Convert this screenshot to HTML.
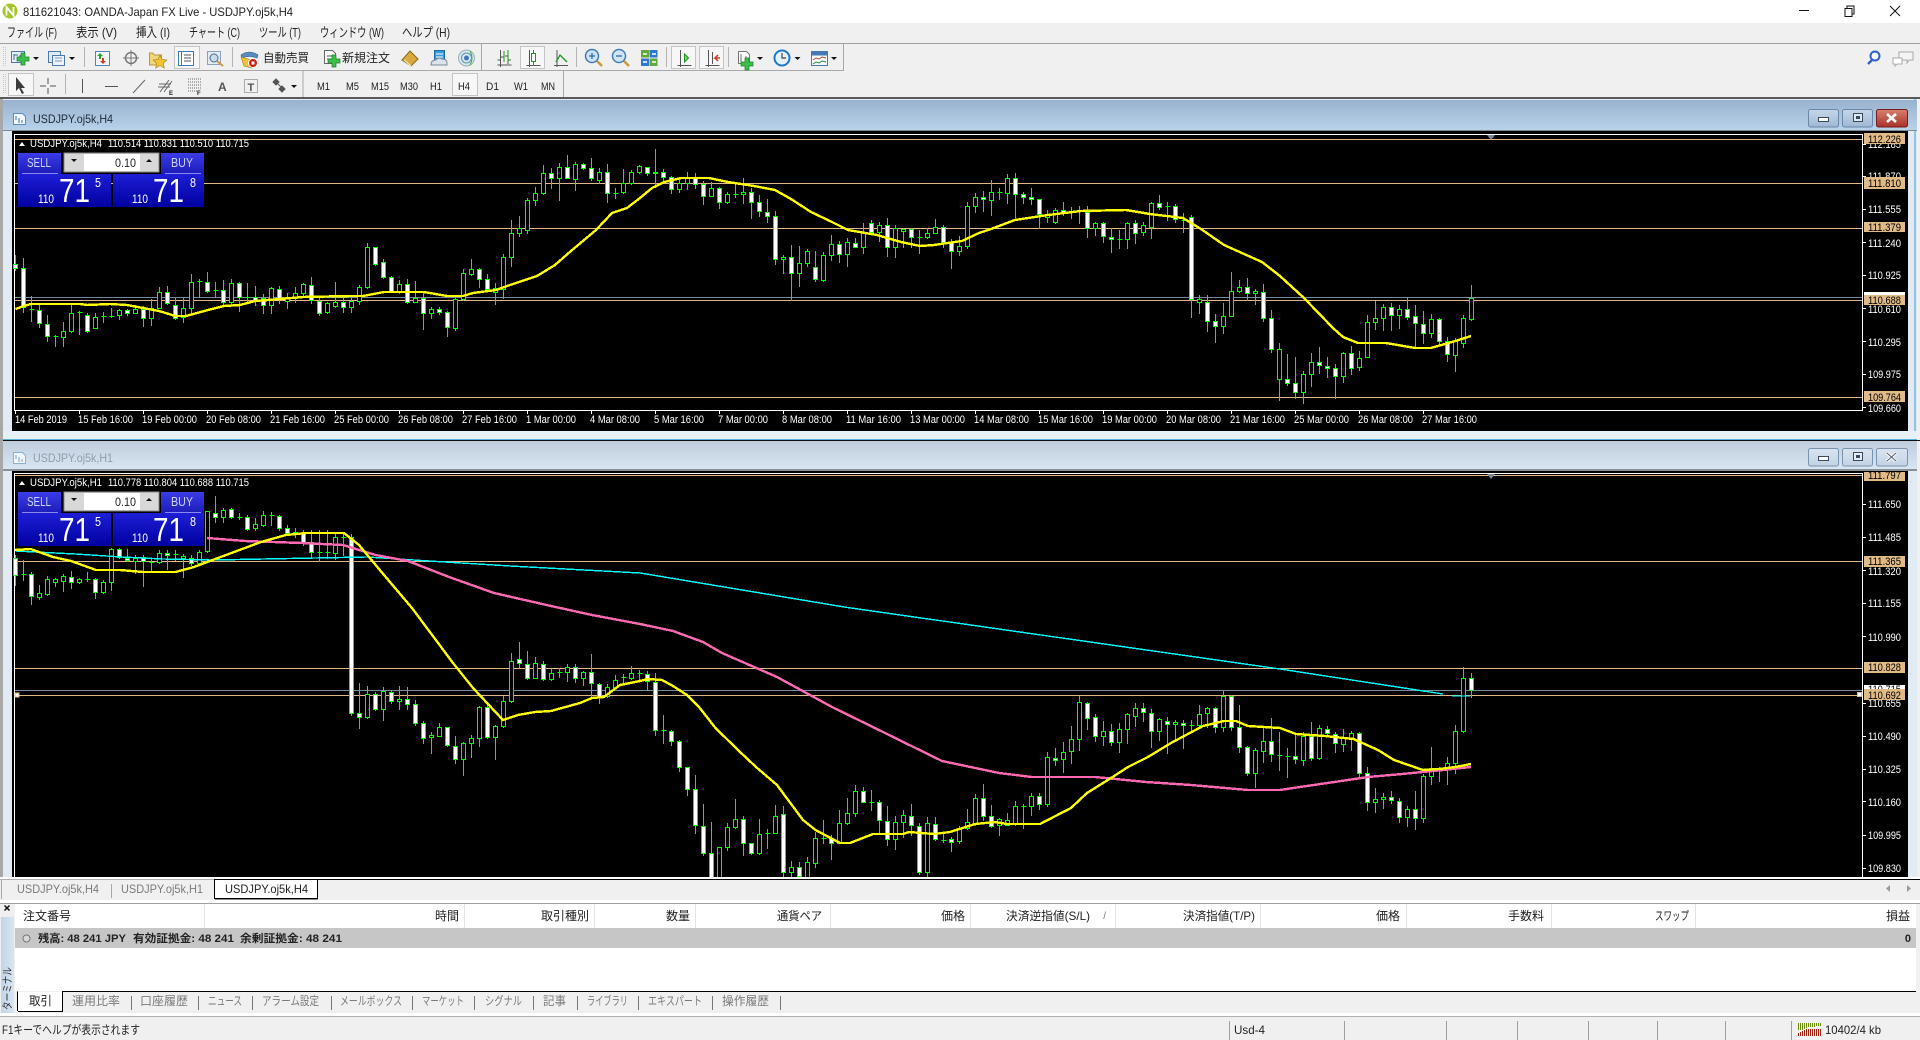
<!DOCTYPE html>
<html><head><meta charset="utf-8"><title>811621043: OANDA-Japan FX Live - USDJPY.oj5k,H4</title>
<style>
html,body{margin:0;padding:0;width:1920px;height:1040px;overflow:hidden;background:#f0f0f0}
svg{display:block}
text{font-family:"Liberation Sans","Noto Sans CJK JP",sans-serif;font-size:12px;fill:#222}
.n text,text.n{font-family:"Liberation Sans Narrow","Liberation Sans","Noto Sans CJK JP",sans-serif;font-size:11px}
.w text{fill:#fff}
.k text{fill:#000}
.g text{fill:#7a7a7a}
.c{shape-rendering:crispEdges}
.m text{font-size:13px}
</style></head><body>
<svg width="1920" height="1040" viewBox="0 0 1920 1040" xmlns="http://www.w3.org/2000/svg">
<defs>
<linearGradient id="t1" x1="0" y1="0" x2="0" y2="1"><stop offset="0" stop-color="#98b2cf"/><stop offset="1" stop-color="#b9d2ea"/></linearGradient>
<linearGradient id="t2" x1="0" y1="0" x2="0" y2="1"><stop offset="0" stop-color="#bfcddc"/><stop offset="1" stop-color="#d9e6f4"/></linearGradient>
<linearGradient id="bs" x1="0" y1="0" x2="0" y2="1"><stop offset="0" stop-color="#3c3ce8"/><stop offset="1" stop-color="#1c1cb8"/></linearGradient>
<linearGradient id="bp" x1="0" y1="0" x2="0" y2="1"><stop offset="0" stop-color="#1e1ed6"/><stop offset="1" stop-color="#0000a0"/></linearGradient>
<linearGradient id="wb" x1="0" y1="0" x2="0" y2="1"><stop offset="0" stop-color="#c6d6e9"/><stop offset="1" stop-color="#9fb8d4"/></linearGradient>
<linearGradient id="wb2" x1="0" y1="0" x2="0" y2="1"><stop offset="0" stop-color="#d9e4f0"/><stop offset="1" stop-color="#c3d3e4"/></linearGradient>
<linearGradient id="wr" x1="0" y1="0" x2="0" y2="1"><stop offset="0" stop-color="#d8806f"/><stop offset="1" stop-color="#a8322a"/></linearGradient>
<linearGradient id="vt" x1="0" y1="0" x2="1" y2="0"><stop offset="0" stop-color="#c2d5e8"/><stop offset="1" stop-color="#d8e5f2"/></linearGradient>
<clipPath id="c1"><rect x="12" y="131" width="1850" height="279"/></clipPath>
<clipPath id="c2"><rect x="12" y="471" width="1850" height="406"/></clipPath>
</defs>

<!-- title bar -->
<rect x="0" y="0" width="1920" height="23" fill="#fff"/>
<circle cx="10" cy="11" r="7.500" fill="#a4c62a"/><path d="M6.500 15.500V7l7 8.500V7" fill="none" stroke="#fff" stroke-width="1.800"/>
<text x="23" y="16" textLength="270" lengthAdjust="spacingAndGlyphs">811621043: OANDA-Japan FX Live - USDJPY.oj5k,H4</text>
<path d="M1799 10.500h10" stroke="#111" class="c"/>
<path d="M1845 8.500h7v8h-7zM1847 8.500v-2.500h7v8h-2" fill="none" stroke="#111" class="c"/>
<path d="M1890 6l10 10M1900 6l-10 10" stroke="#111" fill="none"/>

<!-- menu -->
<g class="m">
<text x="7" y="37" textLength="50" lengthAdjust="spacingAndGlyphs">ファイル (F)</text>
<text x="76" y="37" textLength="41" lengthAdjust="spacingAndGlyphs">表示 (V)</text>
<text x="136" y="37" textLength="34" lengthAdjust="spacingAndGlyphs">挿入 (I)</text>
<text x="189" y="37" textLength="51" lengthAdjust="spacingAndGlyphs">チャート (C)</text>
<text x="259" y="37" textLength="42" lengthAdjust="spacingAndGlyphs">ツール (T)</text>
<text x="320" y="37" textLength="64" lengthAdjust="spacingAndGlyphs">ウィンドウ (W)</text>
<text x="402" y="37" textLength="48" lengthAdjust="spacingAndGlyphs">ヘルプ (H)</text>
</g>
<rect x="0" y="43" width="1920" height="1" fill="#a0a0a0" class="c"/>

<!-- toolbar frames -->
<path d="M0 70.500H843.500V44M0 97.500" fill="none" stroke="#a8a8a8" class="c"/>
<path d="M563.500 71V97" stroke="#a8a8a8" class="c"/>
<path d="M481.500 44V70M303 71V97" stroke="#a8a8a8" class="c"/>
<path d="M3.500 47v20M5.500 47v20M3.500 74v20M5.500 74v20" stroke="#c8c8c8" stroke-dasharray="1 1" class="c"/>
<path d="M84.500 47v20M232.500 47v20M576.500 47v20M666.500 47v20M728.500 47v20M65.500 74v20" stroke="#b4b4b4" class="c"/>
<!-- active buttons -->
<g fill="#f7f7f7" stroke="#c4c4c4" class="c">
<rect x="174.500" y="46.500" width="25" height="22"/><rect x="520.500" y="46.500" width="24" height="22"/>
<rect x="671.500" y="46.500" width="24" height="22"/><rect x="699.500" y="46.500" width="24" height="22"/>
<rect x="8.500" y="73.500" width="25" height="22"/><rect x="452.500" y="73.500" width="25" height="22"/>
</g>

<!-- toolbar 1 icons -->
<rect x="11.500" y="51.500" width="13" height="11" fill="#e6eef8" stroke="#4b78ad" class="c"/>
<path d="M14 60v-6M14 55h4M20 60v-5" stroke="#3b6ea8" fill="none"/>
<path d="M21 53h4v4h4v4h-4v4h-4v-4h-4v-4h4z" fill="#3cc04a" stroke="#1d7f2c" stroke-width=".7"/>
<path d="M33 57h6l-3 3z" fill="#111"/>
<rect x="48.500" y="51.500" width="12" height="11" fill="#dfe8f5" stroke="#4b78ad" class="c"/>
<rect x="52.500" y="55.500" width="12" height="10" fill="#eef3fa" stroke="#4b78ad" class="c"/>
<path d="M55 58h7M55 61h7" stroke="#7a93b4"/>
<path d="M69 57h6l-3 3z" fill="#111"/>
<rect x="95.500" y="51.500" width="14" height="14" fill="#f4f8fc" stroke="#4f86b4" class="c"/>
<path d="M100 53l3 3h-2v3h-2v-3h-2z" fill="#2ca02c"/><path d="M103 64l-3-3h2v-3h2v3h2z" fill="#d83a1c"/>
<circle cx="131" cy="58" r="5.500" fill="none" stroke="#777" stroke-width="1.500"/><path d="M131 50v16M123 58h16" stroke="#777"/>
<path d="M149.500 53v12h12v-10h-7l-2-2z" fill="#f2d77a" stroke="#b8963c"/>
<path d="M160 55l2 4.500 4.800 .5-3.500 3.300 1 4.700-4.300-2.500-4.300 2.500 1-4.700-3.500-3.300 4.800-.5z" fill="#f4c531" stroke="#a8872a" stroke-width=".7"/>
<rect x="178.500" y="51.500" width="15" height="14" fill="#fff" stroke="#3c78b4" class="c"/>
<path d="M181.500 52v13" stroke="#3c78b4"/><path d="M184 55h7M184 58h7M184 61h7" stroke="#555"/>
<rect x="207.500" y="51.500" width="13" height="13" fill="#e4ebf3" stroke="#8aa0b8" class="c"/>
<circle cx="214" cy="58" r="4" fill="#c8dcf0" stroke="#4a6a8a"/><path d="M217 61l6 5" stroke="#c89a3a" stroke-width="2"/>
<path d="M241 55q8-6 17 0l-1 3q-8-3-15 0z" fill="#5a8cc0" stroke="#2f5a88" stroke-width=".6"/>
<path d="M241 57l3 9 8 2v-8z" fill="#f0c040" stroke="#a07818" stroke-width=".6"/>
<circle cx="253" cy="63" r="4.500" fill="#d81c10" stroke="#fff"/><rect x="251.500" y="61.500" width="3" height="3" fill="#fff"/>
<g style="font-size:12px"><text x="263" y="62" textLength="46" lengthAdjust="spacingAndGlyphs">自動売買</text><text x="342" y="62" textLength="48" lengthAdjust="spacingAndGlyphs">新規注文</text></g>
<path d="M324.500 50.500h8l3 3v10h-11z" fill="#fafafa" stroke="#666"/><path d="M327 56h6M327 59h6" stroke="#555"/>
<path d="M332 55h4v4h4v4h-4v4h-4v-4h-4v-4h4z" fill="#3cc04a" stroke="#1d7f2c" stroke-width=".7"/>
<path d="M402 60l8-9 8 8-7 7z" fill="#d9a93f" stroke="#8a6a1a"/><path d="M404 60l7 6" stroke="#f3e2a8" stroke-width="1.200"/>
<rect x="434.500" y="50.500" width="10" height="11" fill="#3a9ad9" stroke="#1c6aa8"/><path d="M436 54h7M436 57h7" stroke="#fff"/>
<path d="M431 65q0-5 5-5 2-3 6-1 5 0 5 4v2z" fill="#dde3ea" stroke="#7a8a9a"/>
<circle cx="466.500" cy="58" r="8" fill="#d9e6ee" stroke="#9ab0b8"/><circle cx="466.500" cy="58" r="5" fill="none" stroke="#5a9aa8"/><circle cx="466.500" cy="58" r="2.500" fill="#3c78c0"/><path d="M470 51q4 7 0 14" fill="none" stroke="#4caf50"/>
<path d="M497.500 65h14M500.500 50v17M508 53v11M500.500 60h-3M500.500 57h3M508 60h3M508 56h-3" stroke="#555" fill="none"/>
<path d="M504 51v3M504 60h0M508 50v12" stroke="#1a9a1a"/><path d="M504 53v9" stroke="#1a9a1a"/>
<path d="M526.500 65.500h14M529.500 50v17" stroke="#555"/><path d="M533.500 50v16" stroke="#1a9a1a"/><rect x="531.500" y="53.500" width="4" height="8" fill="#fff" stroke="#1a9a1a" class="c"/>
<path d="M554 65.500h14M557 50v17" stroke="#555"/><path d="M556 62l4-7 3 3 4 4" fill="none" stroke="#1a9a1a" stroke-width="1.300"/>
<circle cx="592" cy="56" r="6.500" fill="#cfe4f6" stroke="#3e7fb8" stroke-width="1.500"/><path d="M589 56h6M592 53v6" stroke="#2a6aa8" stroke-width="1.300"/><path d="M597 61l5 5" stroke="#c89a3a" stroke-width="2.500"/>
<circle cx="619" cy="56" r="6.500" fill="#cfe4f6" stroke="#3e7fb8" stroke-width="1.500"/><path d="M616 56h6" stroke="#2a6aa8" stroke-width="1.300"/><path d="M624 61l5 5" stroke="#c89a3a" stroke-width="2.500"/>
<rect x="641" y="50" width="8" height="7.500" fill="#62a83a"/><rect x="649.500" y="50" width="8" height="7.500" fill="#2f78d0"/><rect x="641" y="58.500" width="8" height="7.500" fill="#2f78d0"/><rect x="649.500" y="58.500" width="8" height="7.500" fill="#62a83a"/>
<path d="M643 54h4M652 54h4M643 62h4M652 62h4" stroke="#fff" stroke-width="1.500"/>
<path d="M677.500 65.500h14M680.500 50v17" stroke="#555"/><path d="M684.500 54v8l4-4z" fill="#7ad07a" stroke="#1a9a1a"/>
<path d="M705.500 65.500h14M708.500 50v17M712.500 52v12" stroke="#555"/><path d="M720 58l-5 0 3-3M715 58l3 3" fill="none" stroke="#c8401c" stroke-width="1.500"/>
<path d="M738.500 51.500h8l3 3v9h-11z" fill="#fafafa" stroke="#777"/><path d="M741 54v8M746 56v6" stroke="#777"/>
<path d="M745 58h4v4h4v4h-4v4h-4v-4h-4v-4h4z" fill="#3cc04a" stroke="#1d7f2c" stroke-width=".7"/>
<path d="M757 57h6l-3 3z" fill="#111"/>
<circle cx="782" cy="58" r="7.500" fill="#e8f2fa" stroke="#1e78c8" stroke-width="2"/><path d="M782 53v5h4" fill="none" stroke="#444" stroke-width="1.200"/>
<path d="M794.500 57h6l-3 3z" fill="#111"/>
<rect x="811.500" y="51.500" width="16" height="14" fill="#f4f8fc" stroke="#4878a8" class="c"/><rect x="812" y="52" width="15" height="3.500" fill="#4878b8"/>
<path d="M813 60l3-2 3 1 3-2 4 1" fill="none" stroke="#b84a2a"/><path d="M813 64l3-2 3 1 3-2 4 1" fill="none" stroke="#2a8a3a"/>
<path d="M831 57h6l-3 3z" fill="#111"/>
<circle cx="1875" cy="56" r="4.500" fill="#fff" stroke="#2a62c8" stroke-width="2"/><path d="M1872 60l-4 4" stroke="#2a62c8" stroke-width="2.400"/>
<path d="M1899 52h14v8h-4l-2 3v-3h-8z" fill="#f4f4f4" stroke="#a8a8a8"/><path d="M1893 58h9v6h-5l-2 2v-2h-2z" fill="#fff" stroke="#a8a8a8"/>

<!-- toolbar 2 icons -->
<path d="M16 78v14l3-3 3 6 2-1-3-5h4z" fill="#3c3c3c" transform="translate(0 -1)"/>
<path d="M48 78v6M48 88v6M40 86h6M50 86h6" stroke="#555" class="c"/>
<path d="M82.500 79v14" stroke="#555" class="c"/>
<path d="M105 86.500h13" stroke="#555" class="c"/>
<path d="M133 93l12-13" stroke="#666"/>
<path d="M160 92l9-12M164 92l8-11M158 87l12 0M159 84h12" stroke="#666"/><text x="169" y="95" style="font-size:6px;font-weight:bold">E</text>
<path d="M188 79h14M188 82h14M188 85h14M188 88h14M188 91h9" stroke="#666" stroke-dasharray="1 1" class="c"/><text x="197" y="95" style="font-size:6px;font-weight:bold">F</text>
<text x="218" y="91" style="font-size:12px;fill:#555;font-weight:bold">A</text>
<rect x="244.500" y="79.500" width="13" height="13" fill="none" stroke="#666" stroke-dasharray="1 1" class="c"/><text x="247.500" y="91" style="font-size:11px;fill:#555;font-weight:bold">T</text>
<path d="M276 79l3 3-3 3-3-3zM282 86l3 3-3 3-3-3zM276 82l6 6" fill="#555" stroke="#555"/>
<path d="M291 85h6l-3 3z" fill="#111"/>
<g class="n" style="fill:#555">
<text x="317" y="90" fill="#555" textLength="13" lengthAdjust="spacingAndGlyphs">M1</text>
<text x="346" y="90" textLength="13" lengthAdjust="spacingAndGlyphs">M5</text>
<text x="371" y="90" textLength="18" lengthAdjust="spacingAndGlyphs">M15</text>
<text x="400" y="90" textLength="18" lengthAdjust="spacingAndGlyphs">M30</text>
<text x="430" y="90" textLength="12" lengthAdjust="spacingAndGlyphs">H1</text>
<text x="458" y="90" textLength="12" lengthAdjust="spacingAndGlyphs">H4</text>
<text x="486" y="90" textLength="13" lengthAdjust="spacingAndGlyphs">D1</text>
<text x="514" y="90" textLength="14" lengthAdjust="spacingAndGlyphs">W1</text>
<text x="541" y="90" textLength="14" lengthAdjust="spacingAndGlyphs">MN</text>
</g>

<!-- MDI frame -->
<rect x="0" y="97" width="1920" height="2" fill="#5a5a5a" class="c"/>
<rect x="0" y="99" width="1920" height="780" fill="#e2ebf4" class="c"/>
<rect x="0" y="99" width="3" height="780" fill="#a8a8a8" class="c"/>
<rect x="1917" y="99" width="3" height="780" fill="#f0f0f0" class="c"/>
<rect x="1914" y="99" width="2" height="341" fill="#8fc4e4" class="c"/>

<!-- window 1 -->
<rect x="3" y="100" width="1914" height="30" fill="url(#t1)"/>
<rect x="3" y="130" width="1914" height="1" fill="#808890" class="c"/>
<path d="M13.500 113.500h9l3 3v8h-12z" fill="#f0f6fc" stroke="#5a8cc0" class="c"/><path d="M16 116v4M19 118v5M22 120v3" stroke="#3c70a8"/>
<text x="33" y="123" textLength="80" lengthAdjust="spacingAndGlyphs" style="fill:#1a2a38">USDJPY.oj5k,H4</text>
<g>
<rect x="1808.500" y="109.500" width="30" height="17.500" rx="2" fill="url(#wb)" stroke="#6a86a8"/>
<rect x="1818.500" y="117.500" width="10" height="4" fill="#fff" stroke="#3a4a5a"/>
<rect x="1842.500" y="109.500" width="30" height="17.500" rx="2" fill="url(#wb)" stroke="#6a86a8"/>
<rect x="1853.500" y="113.500" width="9" height="8" fill="#dce8f4" stroke="#3a4a5a"/><rect x="1856" y="116" width="4" height="3" fill="#3a4a5a"/>
<rect x="1876.500" y="109.500" width="31" height="17.500" rx="2" fill="url(#wr)" stroke="#7a1c18"/>
<path d="M1887 114l9 8M1896 114l-9 8" stroke="#fff" stroke-width="2.600"/>
</g>
<rect x="12" y="131" width="1896" height="300" fill="#000" class="c"/>
<rect x="3" y="431" width="1914" height="8" fill="#e8f0f7" class="c"/>
<rect x="3" y="439" width="1914" height="1" fill="#5ab0de" class="c"/>
<rect x="3" y="440" width="1917" height="1" fill="#111" class="c"/>

<!-- chart 1 -->
<g class="c" fill="none">
<rect x="14.500" y="134.500" width="1848" height="276" stroke="#fff"/>
<path d="M15 139.500H1862M15 183.500H1862M15 228.500H1862M15 300.500H1862M15 397.500H1862" stroke="#deb887"/>
<path d="M15 297.500H1862" stroke="#778899"/>
<path d="M15.500 411v3M79.500 411v3M143.500 411v3M207.500 411v3M271.500 411v3M335.500 411v3M399.500 411v3M463.500 411v3M527.500 411v3M591.500 411v3M655.500 411v3M719.500 411v3M783.500 411v3M847.500 411v3M911.500 411v3M975.500 411v3M1039.500 411v3M1103.500 411v3M1167.500 411v3M1231.500 411v3M1295.500 411v3M1359.500 411v3M1423.500 411v3" stroke="#fff"/>
<path d="M1863 144.500h3M1863 176.500h3M1863 209.500h3M1863 242.500h3M1863 275.500h3M1863 308.500h3M1863 341.500h3M1863 374.500h3M1863 407.500h3" stroke="#fff"/>
</g>
<path d="M1487 135h8l-4 5z" fill="#778899"/>
<g clip-path="url(#c1)">
<path id="w1" class="c" stroke="#00ff00" fill="none"/>
<path id="b1" class="c" stroke="#00ff00" fill="#000"/>
<path id="s1" class="c" stroke="#00ff00" fill="#fff"/>
<polyline class="c" fill="none" stroke="#ffff00" stroke-width="2.400" points="15.500,309 24,306 31,304 80,304 87,305 110,304 127,305 143,308 159,311 175.500,316 186,316 208,310 224,306 240,305 255,301 280,299 303,297 351,296 363,296 384,292 424,292 447,296 463,296 473,293 496,290 510,285 537,276 555,265 571,251 596,230 612,213 627,208 640,198 652,188 664.500,182 681,178 709,178 728,182 754,186 775,190 791,199 811,212 832,222 848,230 877,235 901,242 920,246 934,245 962,241 979,233 991,229 1015,220 1048,215 1081,211 1126,210 1150,214 1183,218 1201,229 1224,245 1262,262 1280,276 1304,298 1333,328 1343,337 1358,343 1386,343 1415,348 1431,348 1455.500,341 1471,336"/>
</g>

<g class="n w">
<text x="15" y="423" textLength="52" lengthAdjust="spacingAndGlyphs">14 Feb 2019</text>
<text x="78" y="423" textLength="55" lengthAdjust="spacingAndGlyphs">15 Feb 16:00</text>
<text x="142" y="423" textLength="55" lengthAdjust="spacingAndGlyphs">19 Feb 00:00</text>
<text x="206" y="423" textLength="55" lengthAdjust="spacingAndGlyphs">20 Feb 08:00</text>
<text x="270" y="423" textLength="55" lengthAdjust="spacingAndGlyphs">21 Feb 16:00</text>
<text x="334" y="423" textLength="55" lengthAdjust="spacingAndGlyphs">25 Feb 00:00</text>
<text x="398" y="423" textLength="55" lengthAdjust="spacingAndGlyphs">26 Feb 08:00</text>
<text x="462" y="423" textLength="55" lengthAdjust="spacingAndGlyphs">27 Feb 16:00</text>
<text x="526" y="423" textLength="50" lengthAdjust="spacingAndGlyphs">1 Mar 00:00</text>
<text x="590" y="423" textLength="50" lengthAdjust="spacingAndGlyphs">4 Mar 08:00</text>
<text x="654" y="423" textLength="50" lengthAdjust="spacingAndGlyphs">5 Mar 16:00</text>
<text x="718" y="423" textLength="50" lengthAdjust="spacingAndGlyphs">7 Mar 00:00</text>
<text x="782" y="423" textLength="50" lengthAdjust="spacingAndGlyphs">8 Mar 08:00</text>
<text x="846" y="423" textLength="55" lengthAdjust="spacingAndGlyphs">11 Mar 16:00</text>
<text x="910" y="423" textLength="55" lengthAdjust="spacingAndGlyphs">13 Mar 00:00</text>
<text x="974" y="423" textLength="55" lengthAdjust="spacingAndGlyphs">14 Mar 08:00</text>
<text x="1038" y="423" textLength="55" lengthAdjust="spacingAndGlyphs">15 Mar 16:00</text>
<text x="1102" y="423" textLength="55" lengthAdjust="spacingAndGlyphs">19 Mar 00:00</text>
<text x="1166" y="423" textLength="55" lengthAdjust="spacingAndGlyphs">20 Mar 08:00</text>
<text x="1230" y="423" textLength="55" lengthAdjust="spacingAndGlyphs">21 Mar 16:00</text>
<text x="1294" y="423" textLength="55" lengthAdjust="spacingAndGlyphs">25 Mar 00:00</text>
<text x="1358" y="423" textLength="55" lengthAdjust="spacingAndGlyphs">26 Mar 08:00</text>
<text x="1422" y="423" textLength="55" lengthAdjust="spacingAndGlyphs">27 Mar 16:00</text>
<text x="1868" y="148" textLength="33" lengthAdjust="spacingAndGlyphs">112.185</text>
<text x="1868" y="180" textLength="33" lengthAdjust="spacingAndGlyphs">111.870</text>
<text x="1868" y="213" textLength="33" lengthAdjust="spacingAndGlyphs">111.555</text>
<text x="1868" y="247" textLength="33" lengthAdjust="spacingAndGlyphs">111.240</text>
<text x="1868" y="279" textLength="33" lengthAdjust="spacingAndGlyphs">110.925</text>
<text x="1868" y="313" textLength="33" lengthAdjust="spacingAndGlyphs">110.610</text>
<text x="1868" y="346" textLength="33" lengthAdjust="spacingAndGlyphs">110.295</text>
<text x="1868" y="378" textLength="33" lengthAdjust="spacingAndGlyphs">109.975</text>
<text x="1868" y="412" textLength="33" lengthAdjust="spacingAndGlyphs">109.660</text>
</g>
<g fill="#e0bb88" class="c">
<rect x="1864" y="133" width="41" height="11"/><rect x="1864" y="177" width="41" height="12"/><rect x="1864" y="222" width="41" height="10"/>
<rect x="1864" y="292" width="41" height="3" fill="#fff"/><rect x="1864" y="295" width="41" height="10"/><rect x="1864" y="391" width="41" height="11"/>
</g>
<g class="n k">
<text x="1868" y="143" textLength="33" lengthAdjust="spacingAndGlyphs">112.226</text>
<text x="1868" y="187" textLength="33" lengthAdjust="spacingAndGlyphs">111.810</text>
<text x="1868" y="231" textLength="33" lengthAdjust="spacingAndGlyphs">111.379</text>
<text x="1868" y="304" textLength="33" lengthAdjust="spacingAndGlyphs">110.688</text>
<text x="1868" y="401" textLength="33" lengthAdjust="spacingAndGlyphs">109.764</text>
</g>

<!-- panel 1 -->
<g>
<path d="M19 146h6l-3-4z" fill="#fff"/>
<g class="n w"><text x="30" y="147" textLength="72" lengthAdjust="spacingAndGlyphs">USDJPY.oj5k,H4</text><text x="108" y="147" textLength="141" lengthAdjust="spacingAndGlyphs">110.514 110.831 110.510 110.715</text></g>
<rect x="18" y="153" width="43" height="21" fill="url(#bs)"/><path d="M22 173.500h36" stroke="#8a8aee" class="c"/>
<rect x="161" y="153" width="43" height="21" fill="url(#bs)"/><path d="M165 173.500h36" stroke="#8a8aee" class="c"/>
<text class="n" x="27" y="167" textLength="24" lengthAdjust="spacingAndGlyphs" style="fill:#c8d4ff;font-size:13px">SELL</text>
<text class="n" x="171" y="167" textLength="22" lengthAdjust="spacingAndGlyphs" style="fill:#c8d4ff;font-size:13px">BUY</text>
<rect x="64" y="153" width="95" height="19" fill="#d8d8d8" stroke="#8a8a8a" class="c"/>
<rect x="84" y="154" width="56" height="17" fill="#fff" class="c"/>
<path d="M71 159h6l-3 3z" fill="#111"/><path d="M146 162h6l-3-3z" fill="#111"/>
<text class="n" x="115" y="167" textLength="21" lengthAdjust="spacingAndGlyphs" style="font-size:12px;fill:#222">0.10</text>
<rect x="18" y="174" width="93" height="33" fill="url(#bp)"/><rect x="113" y="174" width="91" height="33" fill="url(#bp)"/>
<g class="n w">
<text x="38" y="203" textLength="16" lengthAdjust="spacingAndGlyphs" style="font-size:12px">110</text>
<text x="59" y="202" textLength="31" lengthAdjust="spacingAndGlyphs" style="font-size:33px">71</text>
<text x="95" y="187" textLength="6" lengthAdjust="spacingAndGlyphs" style="font-size:13px">5</text>
<text x="132" y="203" textLength="16" lengthAdjust="spacingAndGlyphs" style="font-size:12px">110</text>
<text x="153" y="202" textLength="31" lengthAdjust="spacingAndGlyphs" style="font-size:33px">71</text>
<text x="190" y="187" textLength="6" lengthAdjust="spacingAndGlyphs" style="font-size:13px">8</text>
</g>
</g>

<!-- window 2 -->
<rect x="3" y="441" width="1914" height="29" fill="url(#t2)"/>
<rect x="3" y="469" width="1914" height="2" fill="#8a9098" class="c"/>
<path d="M13.500 452.500h9l3 3v8h-12z" fill="#f0f6fc" stroke="#8ab0d0" class="c"/><path d="M16 455v4M19 457v5M22 459v3" stroke="#7aa0c8"/>
<text x="33" y="462" textLength="80" lengthAdjust="spacingAndGlyphs" style="fill:#8f9eab">USDJPY.oj5k,H1</text>
<g>
<rect x="1808.500" y="448.500" width="30" height="17.500" rx="2" fill="url(#wb2)" stroke="#7a94b0"/>
<rect x="1818.500" y="456.500" width="10" height="4" fill="#fff" stroke="#3a4a5a"/>
<rect x="1842.500" y="448.500" width="30" height="17.500" rx="2" fill="url(#wb2)" stroke="#7a94b0"/>
<rect x="1853.500" y="452.500" width="9" height="8" fill="#e4ecf4" stroke="#3a4a5a"/><rect x="1856" y="455" width="4" height="3" fill="#3a4a5a"/>
<rect x="1876.500" y="448.500" width="31" height="17.500" rx="2" fill="url(#wb2)" stroke="#7a94b0"/>
<path d="M1887 453l9 8M1896 453l-9 8" stroke="#fff" stroke-width="3"/><path d="M1887 453l9 8M1896 453l-9 8" stroke="#4a5a6a" stroke-width="1"/>
</g>
<rect x="12" y="471" width="1896" height="406" fill="#000" class="c"/>

<!-- chart 2 -->
<g class="c" fill="none">
<path d="M14.500 877V473.500H1862.500V877" stroke="#fff"/>
<path d="M15 475.500H1862M15 561.500H1862M15 668.500H1862M15 695.500H1862" stroke="#deb887"/>
<path d="M15 690.500H1862" stroke="#778899"/>
<path d="M1863 504.500h3M1863 537.500h3M1863 570.500h3M1863 603.500h3M1863 636.500h3M1863 703.500h3M1863 736.500h3M1863 769.500h3M1863 801.500h3M1863 835.500h3M1863 868.500h3" stroke="#fff"/>
</g>
<path d="M1487 474h8l-4 5z" fill="#778899"/>
<g clip-path="url(#c2)">
<path id="w2" class="c" stroke="#00ff00" fill="none"/>
<path id="b2" class="c" stroke="#00ff00" fill="#000"/>
<path id="s2" class="c" stroke="#00ff00" fill="#fff"/>
<polyline class="c" fill="none" stroke="#00ffff" stroke-width="1.400" points="15.500,551 75.500,554 122,557 163,559 212,560 367,557 429,561 510,566 640,573 844,607 1048,636 1280,669 1443,694"/>
<polyline class="c" fill="none" stroke="#00ffff" stroke-width="1.400" points="1452,696 1470,696"/>
<polyline class="c" fill="none" stroke="#ff69b4" stroke-width="2.400" points="207,538 245,541 302,543 343,545 375.500,555 408,561 449,577 494,593 551,606 592,615 640,624 673,631 703,642 722,653 777,677 832,707 885,733 942,761 999,773 1032,777 1095,777 1146,782 1191,785 1248,790 1280,790 1300,787 1341,781 1368,777 1402,774 1443,770 1471,767"/>
<polyline class="c" fill="none" stroke="#ffff00" stroke-width="2.400" points="15,550 30.500,549 53,557 71,561 96,570 120,570 143,572 175.500,572 194,567 218,558 261,542 286,535 306,533 344,533 359,545 384,575 412,608 453,663 473,688 503,720 518,715 535,712 551,711 580,703 592,698 604,697 620,685 640,681 648,679 662,680 673,686 687,695 699,707 715.500,728 738,750 756,767 777,785 803,820 815.500,830 840,843 850,843 873,834 903,834 909,832 934,834 950,832 975,824 995,822 1007,824 1040,824 1071,808 1087,793 1111,778 1128,767 1148,757 1171,743 1203,726 1224,721 1236,721 1248,726 1280,728 1296,734 1325,736 1353.500,739 1378,750 1394,760 1423,770 1439,769 1455.500,767 1471,764"/>
</g>
<rect x="15" y="693" width="4" height="4" fill="#fff" stroke="#deb887" class="c"/>
<rect x="1857.500" y="692.500" width="4" height="4" fill="#fff" stroke="#deb887" class="c"/>

<g class="n w">
<text x="1868" y="508" textLength="33" lengthAdjust="spacingAndGlyphs">111.650</text>
<text x="1868" y="541" textLength="33" lengthAdjust="spacingAndGlyphs">111.485</text>
<text x="1868" y="575" textLength="33" lengthAdjust="spacingAndGlyphs">111.320</text>
<text x="1868" y="607" textLength="33" lengthAdjust="spacingAndGlyphs">111.155</text>
<text x="1868" y="641" textLength="33" lengthAdjust="spacingAndGlyphs">110.990</text>
<text x="1868" y="707" textLength="33" lengthAdjust="spacingAndGlyphs">110.655</text>
<text x="1868" y="740" textLength="33" lengthAdjust="spacingAndGlyphs">110.490</text>
<text x="1868" y="773" textLength="33" lengthAdjust="spacingAndGlyphs">110.325</text>
<text x="1868" y="806" textLength="33" lengthAdjust="spacingAndGlyphs">110.160</text>
<text x="1868" y="839" textLength="33" lengthAdjust="spacingAndGlyphs">109.995</text>
<text x="1868" y="872" textLength="33" lengthAdjust="spacingAndGlyphs">109.830</text>
</g>
<rect x="1864" y="685" width="41" height="8" fill="#fff" class="c"/>
<text class="n" x="1868" y="693" textLength="33" lengthAdjust="spacingAndGlyphs" style="fill:#000">110.715</text>
<g fill="#e0bb88" class="c">
<rect x="1864" y="472" width="41" height="9"/><rect x="1864" y="556" width="41" height="11"/><rect x="1864" y="662" width="41" height="11"/><rect x="1864" y="689" width="41" height="11"/>
</g>
<g class="n k">
<text x="1868" y="479" textLength="33" lengthAdjust="spacingAndGlyphs">111.797</text>
<text x="1868" y="565" textLength="33" lengthAdjust="spacingAndGlyphs">111.365</text>
<text x="1868" y="671" textLength="33" lengthAdjust="spacingAndGlyphs">110.828</text>
<text x="1868" y="699" textLength="33" lengthAdjust="spacingAndGlyphs">110.692</text>
</g>

<!-- panel 2 -->
<g transform="translate(0 339)">
<path d="M19 146h6l-3-4z" fill="#fff"/>
<g class="n w"><text x="30" y="147" textLength="72" lengthAdjust="spacingAndGlyphs">USDJPY.oj5k,H1</text><text x="108" y="147" textLength="141" lengthAdjust="spacingAndGlyphs">110.778 110.804 110.688 110.715</text></g>
<rect x="18" y="153" width="43" height="21" fill="url(#bs)"/><path d="M22 173.500h36" stroke="#8a8aee" class="c"/>
<rect x="161" y="153" width="43" height="21" fill="url(#bs)"/><path d="M165 173.500h36" stroke="#8a8aee" class="c"/>
<text class="n" x="27" y="167" textLength="24" lengthAdjust="spacingAndGlyphs" style="fill:#c8d4ff;font-size:13px">SELL</text>
<text class="n" x="171" y="167" textLength="22" lengthAdjust="spacingAndGlyphs" style="fill:#c8d4ff;font-size:13px">BUY</text>
<rect x="64" y="153" width="95" height="19" fill="#d8d8d8" stroke="#8a8a8a" class="c"/>
<rect x="84" y="154" width="56" height="17" fill="#fff" class="c"/>
<path d="M71 159h6l-3 3z" fill="#111"/><path d="M146 162h6l-3-3z" fill="#111"/>
<text class="n" x="115" y="167" textLength="21" lengthAdjust="spacingAndGlyphs" style="font-size:12px;fill:#222">0.10</text>
<rect x="18" y="174" width="93" height="33" fill="url(#bp)"/><rect x="113" y="174" width="91" height="33" fill="url(#bp)"/>
<g class="n w">
<text x="38" y="203" textLength="16" lengthAdjust="spacingAndGlyphs" style="font-size:12px">110</text>
<text x="59" y="202" textLength="31" lengthAdjust="spacingAndGlyphs" style="font-size:33px">71</text>
<text x="95" y="187" textLength="6" lengthAdjust="spacingAndGlyphs" style="font-size:13px">5</text>
<text x="132" y="203" textLength="16" lengthAdjust="spacingAndGlyphs" style="font-size:12px">110</text>
<text x="153" y="202" textLength="31" lengthAdjust="spacingAndGlyphs" style="font-size:33px">71</text>
<text x="190" y="187" textLength="6" lengthAdjust="spacingAndGlyphs" style="font-size:13px">8</text>
</g>
</g>

<!-- MDI tabs -->
<rect x="0" y="877" width="1920" height="2" fill="#fff" class="c"/>
<rect x="0" y="879" width="1920" height="23" fill="#f0f0f0" class="c"/>
<path d="M0 879.500H214M318 879.500H1920" stroke="#000" class="c"/>
<path d="M0 879.500H214" stroke="#b0b0b0" class="c"/>
<path d="M1.500 880v19M111.500 884v14" stroke="#a8a8a8" class="c"/>
<path d="M214.500 899V879.500H317.500V898.500H214.500" fill="#fff" stroke="#000" class="c"/>
<path d="M215 899.500h103" stroke="#888" class="c"/>
<g class="g">
<text x="17" y="893" textLength="82" lengthAdjust="spacingAndGlyphs">USDJPY.oj5k,H4</text>
<text x="121" y="893" textLength="82" lengthAdjust="spacingAndGlyphs">USDJPY.oj5k,H1</text>
</g>
<text x="225" y="893" textLength="83" lengthAdjust="spacingAndGlyphs">USDJPY.oj5k,H4</text>
<path d="M1890 885v7l-4-3.500z" fill="#9a9a9a"/><path d="M1907 885v7l4-3.500z" fill="#9a9a9a"/>
<rect x="0" y="900" width="1920" height="3" fill="#fff" class="c"/>
<rect x="0" y="903" width="1920" height="1" fill="#a0a0a0" class="c"/>

<!-- terminal -->
<rect x="0" y="904" width="1920" height="136" fill="#f0f0f0" class="c"/>
<path d="M4.500 905.500l5 5M9.500 905.500l-5 5" stroke="#111" stroke-width="1.500"/>
<rect x="1" y="917" width="13" height="97" fill="url(#vt)"/>
<text transform="translate(11 1010) rotate(-90)" textLength="43" lengthAdjust="spacingAndGlyphs" style="font-size:11px;fill:#333">ターミナル</text>
<rect x="15" y="904" width="1901" height="87" fill="#fff" class="c"/>
<path d="M204.500 904v24M464.500 904v24M594.500 904v24M695.500 904v24M830.500 904v24M970.500 904v24M1115.500 904v24M1260.500 904v24M1406.500 904v24M1551.500 904v24M1695.500 904v24" stroke="#e2e2e2" class="c"/>
<text x="23" y="920">注文番号</text>
<g text-anchor="end">
<text x="459" y="920">時間</text>
<text x="589" y="920">取引種別</text>
<text x="690" y="920">数量</text>
<text x="822" y="920" textLength="45" lengthAdjust="spacingAndGlyphs">通貨ペア</text>
<text x="965" y="920">価格</text>
<text x="1090" y="920" textLength="84" lengthAdjust="spacingAndGlyphs">決済逆指値(S/L)</text>
<text x="1106" y="919" style="font-size:10px;fill:#777">/</text>
<text x="1255" y="920" textLength="72" lengthAdjust="spacingAndGlyphs">決済指値(T/P)</text>
<text x="1400" y="920">価格</text>
<text x="1544" y="920">手数料</text>
<text x="1689" y="920" textLength="34" lengthAdjust="spacingAndGlyphs">スワップ</text>
<text x="1910" y="920">損益</text>
</g>
<rect x="15" y="928" width="1901" height="20" fill="#c6c6c6" class="c"/>
<circle cx="26.500" cy="938.500" r="3.500" fill="#d8d8d8" stroke="#777"/>
<g style="font-weight:bold">
<text x="38" y="942" textLength="88" lengthAdjust="spacingAndGlyphs" style="font-weight:bold;font-size:11px">残高: 48 241 JPY</text>
<text x="133" y="942" textLength="101" lengthAdjust="spacingAndGlyphs" style="font-weight:bold;font-size:11px">有効証拠金: 48 241</text>
<text x="240" y="942" textLength="102" lengthAdjust="spacingAndGlyphs" style="font-weight:bold;font-size:11px">余剰証拠金: 48 241</text>
<text x="1911" y="942" text-anchor="end" style="font-weight:bold;font-size:11px">0</text>
</g>
<!-- terminal tabs -->
<path d="M62 991.500H1916" stroke="#000" class="c"/>
<path d="M17.500 1011V991.500M62.500 992V1011M18 1011.500H63" stroke="#000" fill="none" class="c"/>
<rect x="18" y="992" width="44" height="19" fill="#fff" class="c"/>
<rect x="0" y="1013" width="1920" height="3" fill="#fff" class="c"/>
<rect x="0" y="1016" width="1920" height="1" fill="#b0b0b0" class="c"/>
<text x="29" y="1005" textLength="23" lengthAdjust="spacingAndGlyphs">取引</text>
<g class="g">
<text x="72" y="1005" textLength="48" lengthAdjust="spacingAndGlyphs">運用比率</text>
<text x="140" y="1005" textLength="48" lengthAdjust="spacingAndGlyphs">口座履歴</text>
<text x="208" y="1005" textLength="34" lengthAdjust="spacingAndGlyphs">ニュース</text>
<text x="262" y="1005" textLength="57" lengthAdjust="spacingAndGlyphs">アラーム設定</text>
<text x="340" y="1005" textLength="62" lengthAdjust="spacingAndGlyphs">メールボックス</text>
<text x="422" y="1005" textLength="42" lengthAdjust="spacingAndGlyphs">マーケット</text>
<text x="485" y="1005" textLength="37" lengthAdjust="spacingAndGlyphs">シグナル</text>
<text x="543" y="1005" textLength="23" lengthAdjust="spacingAndGlyphs">記事</text>
<text x="587" y="1005" textLength="41" lengthAdjust="spacingAndGlyphs">ライブラリ</text>
<text x="648" y="1005" textLength="54" lengthAdjust="spacingAndGlyphs">エキスパート</text>
<text x="722" y="1005" textLength="47" lengthAdjust="spacingAndGlyphs">操作履歴</text>
</g>
<path d="M131.500 996v14M198.500 996v14M252.500 996v14M331.500 996v14M412.500 996v14M474.500 996v14M533.500 996v14M577.500 996v14M638.500 996v14M712.500 996v14M780.500 996v14" stroke="#777" class="c"/>

<!-- status bar -->
<text x="2" y="1034" textLength="138" lengthAdjust="spacingAndGlyphs">F1キーでヘルプが表示されます</text>
<text x="1234" y="1034" textLength="31" lengthAdjust="spacingAndGlyphs">Usd-4</text>
<text x="1825" y="1034" textLength="56" lengthAdjust="spacingAndGlyphs">10402/4 kb</text>
<path d="M1229.500 1021v19M1344.500 1021v19M1446.500 1021v19M1517.500 1021v19M1588.500 1021v19M1657.500 1021v19M1725.500 1021v19M1791.500 1021v19" stroke="#a0a0a0" class="c"/>
<g class="c">
<path d="M1798.500 1036v-3M1800.500 1036v-4M1802.500 1036v-5M1804.500 1036v-6M1806.500 1036v-7M1808.500 1036v-7M1810.500 1036v-7M1812.500 1036v-7M1814.500 1036v-7M1816.500 1036v-7M1818.500 1036v-7M1820.500 1036v-7" stroke="#a02010"/>
<path d="M1798.500 1030v-7M1800.500 1030v-7M1802.500 1030v-7M1804.500 1029v-6M1806.500 1028v-5M1808.500 1027v-4M1810.500 1027v-4M1812.500 1027v-4M1814.500 1027v-4M1816.500 1026v-3M1818.500 1026v-3M1820.500 1026v-3" stroke="#6a8a10"/>
</g>
</svg>
<script>
var D1="255,264,268,270,1 258,268,307,312,1 296,309,309,321,0 305,310,323,327,1 315,324,336,341,1 335,336,336,346,0 322,331,337,346,0 305,313,331,332,0 311,312,312,334,0 313,315,331,332,1 313,317,328,328,0 312,316,316,322,0 308,316,316,317,0 309,310,315,319,0 309,310,313,315,1 305,309,313,313,0 306,309,318,326,1 299,308,318,325,0 287,292,308,308,0 286,292,303,304,1 298,305,318,319,1 298,308,317,322,0 274,282,308,313,0 279,281,281,297,0 272,282,291,292,1 282,290,290,297,0 280,290,302,304,1 279,283,302,304,0 282,283,297,311,1 283,297,297,301,0 286,297,300,305,1 294,298,305,313,1 287,288,305,313,0 286,289,299,303,1 293,297,301,308,0 287,293,298,302,0 283,284,293,296,0 277,285,300,303,1 298,301,313,315,1 302,303,312,313,0 282,302,306,307,0 297,302,307,312,1 297,301,307,312,0 285,287,301,304,0 243,247,287,288,0 247,247,264,265,1 259,262,277,278,1 276,277,291,292,1 280,284,291,293,0 279,284,302,303,1 281,298,302,302,0 293,298,313,329,1 307,309,313,318,0 307,309,312,314,1 311,312,327,336,1 298,299,328,330,0 269,273,299,300,0 259,269,274,275,0 268,269,279,287,1 274,279,289,290,1 283,288,292,304,0 254,257,289,298,0 220,233,257,266,0 216,228,233,236,0 198,200,230,233,0 187,193,200,205,0 165,173,193,194,0 168,173,178,188,1 163,167,178,200,0 155,167,178,178,1 162,164,179,190,0 163,164,168,169,1 158,168,178,180,1 168,172,180,183,0 164,172,193,202,1 188,193,193,198,0 169,183,192,193,0 170,172,183,184,0 165,166,172,173,0 167,167,173,175,1 149,172,173,187,0 169,172,177,183,1 176,177,189,193,1 178,183,189,192,0 172,177,183,189,0 173,177,184,188,1 181,184,196,204,1 182,188,196,196,0 187,188,202,208,1 192,194,202,203,0 182,194,194,197,0 178,192,194,203,0 188,192,202,218,1 195,202,211,216,1 199,212,216,222,1 211,216,259,264,1 255,257,259,273,0 245,257,273,300,1 246,263,273,286,0 249,251,263,266,0 251,267,279,281,1 252,255,280,281,0 235,244,255,260,0 241,244,254,262,1 238,242,254,266,0 238,243,247,247,1 223,232,247,253,0 220,223,232,232,1 222,225,232,241,0 218,225,247,256,1 225,228,247,257,0 228,229,231,247,0 228,229,237,247,1 230,237,237,253,0 228,233,237,238,0 219,227,233,233,0 225,227,242,247,1 239,242,251,268,1 236,246,251,255,0 202,206,246,248,0 193,197,206,212,0 191,197,199,211,1 180,192,200,215,0 188,192,192,199,0 174,178,193,203,0 173,178,194,217,1 192,194,197,203,1 188,197,199,204,1 199,199,214,228,1 210,214,217,222,0 208,210,222,223,0 202,210,213,215,1 207,211,211,218,0 206,211,211,223,0 206,212,228,237,1 222,223,228,235,0 222,223,236,242,1 228,237,239,252,1 230,239,239,248,0 222,223,239,248,0 220,223,233,243,1 222,225,232,235,0 202,203,227,238,0 195,203,207,209,1 202,206,206,220,0 204,206,219,222,1 213,220,220,232,0 215,217,299,317,1 295,299,302,313,0 295,302,321,331,1 314,321,326,342,1 303,316,326,333,0 272,291,316,316,0 280,287,291,292,0 278,287,293,300,1 289,291,293,304,0 284,292,318,321,1 310,318,349,352,1 343,349,379,400,0 354,379,383,385,1 357,383,392,398,1 371,374,392,403,0 353,362,374,386,0 347,362,365,373,1 357,366,368,377,1 364,368,376,398,1 352,353,376,382,0 346,353,368,374,1 351,358,367,370,0 315,322,357,357,0 301,318,322,329,0 304,307,318,330,0 303,307,315,330,1 305,309,315,328,0 297,309,317,319,1 305,316,323,347,1 311,324,333,343,1 314,319,333,337,0 318,319,341,345,1 337,341,354,361,1 338,341,355,371,0 315,318,343,347,0 285,298,319,320,0";
var D2="555,558,575,585,1 560,574,574,580,0 572,574,596,604,1 585,593,597,599,0 576,579,594,595,0 578,579,582,586,0 574,576,581,591,0 571,577,582,588,1 578,579,582,583,0 572,579,579,581,0 578,579,592,598,1 580,582,592,593,0 548,549,582,590,0 548,549,557,558,1 549,558,560,561,1 555,558,561,573,0 555,557,561,586,1 559,562,562,572,0 550,553,562,563,0 550,553,555,569,1 550,554,554,560,0 554,556,558,577,0 555,558,563,565,1 550,552,563,565,0 511,511,551,552,0 496,513,517,522,1 508,510,517,522,0 508,509,517,518,1 513,517,517,519,0 515,517,529,530,1 518,524,528,530,0 511,515,525,526,0 512,515,515,525,0 515,516,528,530,1 525,528,533,535,1 528,532,534,537,1 530,533,542,545,1 530,542,552,558,1 530,552,552,561,0 530,552,552,558,0 533,537,553,559,0 533,537,537,555,0 534,537,713,715,1 683,713,717,728,1 686,694,717,718,0 692,694,709,710,1 687,691,709,720,0 690,692,701,703,1 686,699,701,709,0 687,699,704,709,1 700,704,723,725,1 721,723,738,743,1 732,735,737,753,0 723,727,736,736,0 727,727,745,746,1 736,746,759,763,1 742,743,759,775,0 735,738,743,757,0 706,707,738,746,0 705,707,737,738,1 725,726,737,759,0 696,701,726,727,0 653,661,701,702,0 642,659,663,667,1 651,664,678,679,1 657,663,678,678,0 661,664,679,680,1 669,673,679,680,0 668,672,672,677,0 664,667,672,681,0 664,667,678,682,1 671,672,678,685,0 654,672,683,697,1 683,684,697,703,1 684,687,696,697,0 675,680,687,688,0 674,677,677,683,0 666,673,678,679,0 670,673,673,680,0 671,674,681,690,1 673,682,730,735,1 715,730,730,743,0 730,731,741,745,1 740,741,767,771,1 767,767,789,795,1 775,789,825,833,1 804,826,853,855,1 822,853,877,877,1 847,847,877,877,0 823,827,847,850,0 799,819,827,828,0 816,819,843,855,1 843,843,853,854,1 819,834,853,854,0 829,833,833,848,0 805,816,833,833,0 806,814,872,877,1 861,867,872,877,0 862,867,876,877,1 857,862,877,877,0 832,838,863,867,0 820,838,838,843,0 835,838,843,859,1 810,823,843,843,0 798,813,823,824,0 785,791,813,816,0 787,791,802,802,1 790,802,802,810,0 800,802,820,832,1 806,821,839,845,1 816,822,839,849,0 810,815,822,837,0 804,816,825,835,1 823,826,872,874,1 817,823,872,877,0 817,824,839,840,1 832,840,840,842,0 837,839,842,851,1 826,828,841,843,0 809,822,828,829,0 794,798,823,825,0 784,798,816,820,1 805,816,826,827,1 818,819,825,835,0 813,820,825,825,0 801,806,824,825,0 804,806,806,828,0 793,796,806,815,0 793,796,804,809,1 752,757,804,806,0 748,758,760,765,1 742,752,759,772,0 726,739,751,763,0 696,702,739,750,0 702,703,718,729,1 714,717,736,741,1 721,731,736,745,0 724,731,742,745,1 723,729,742,752,0 713,714,729,743,0 703,708,716,726,0 703,708,712,721,1 709,713,731,747,1 718,719,731,740,0 717,721,724,753,1 720,722,724,741,0 720,723,725,748,1 720,725,725,731,0 705,714,725,727,0 707,708,713,727,0 707,708,727,732,1 691,696,727,731,0 695,696,727,730,1 705,727,747,752,1 746,747,773,775,1 748,750,773,787,0 727,741,751,762,0 718,741,754,761,1 732,755,755,770,0 748,756,756,777,0 734,756,759,763,1 732,736,760,765,0 722,736,758,760,1 725,728,758,759,0 726,729,733,734,1 732,734,743,752,1 729,737,744,751,0 731,733,738,750,0 732,733,773,778,1 767,773,802,810,1 788,799,802,812,0 793,797,799,808,0 791,797,800,803,1 798,801,817,822,1 806,809,817,826,0 791,809,818,829,1 774,776,818,822,0 747,768,776,784,0 767,769,769,781,0 757,763,769,784,0 725,731,763,773,0 667,678,731,732,0 673,678,690,697,1";
function draw(s,n){var w="",b="",f="";s.split(" ").forEach(function(c,i){var a=c.split(",").map(Number),x=15.5+8*i;
w+="M"+x+" "+a[0]+"V"+(a[3]+1);
if(a[1]==a[2]){w+="M"+(x-2)+" "+(a[1]+.5)+"H"+(x+3);return}
var r="M"+(x-2)+" "+(a[1]+.5)+"H"+(x+2)+"V"+(a[2]+.5)+"H"+(x-2)+"Z";
if(a[4])f+=r;else b+=r;});
document.getElementById("w"+n).setAttribute("d",w);
document.getElementById("b"+n).setAttribute("d",b);
document.getElementById("s"+n).setAttribute("d",f);}
draw(D1,1);draw(D2,2);
</script>
</body></html>
